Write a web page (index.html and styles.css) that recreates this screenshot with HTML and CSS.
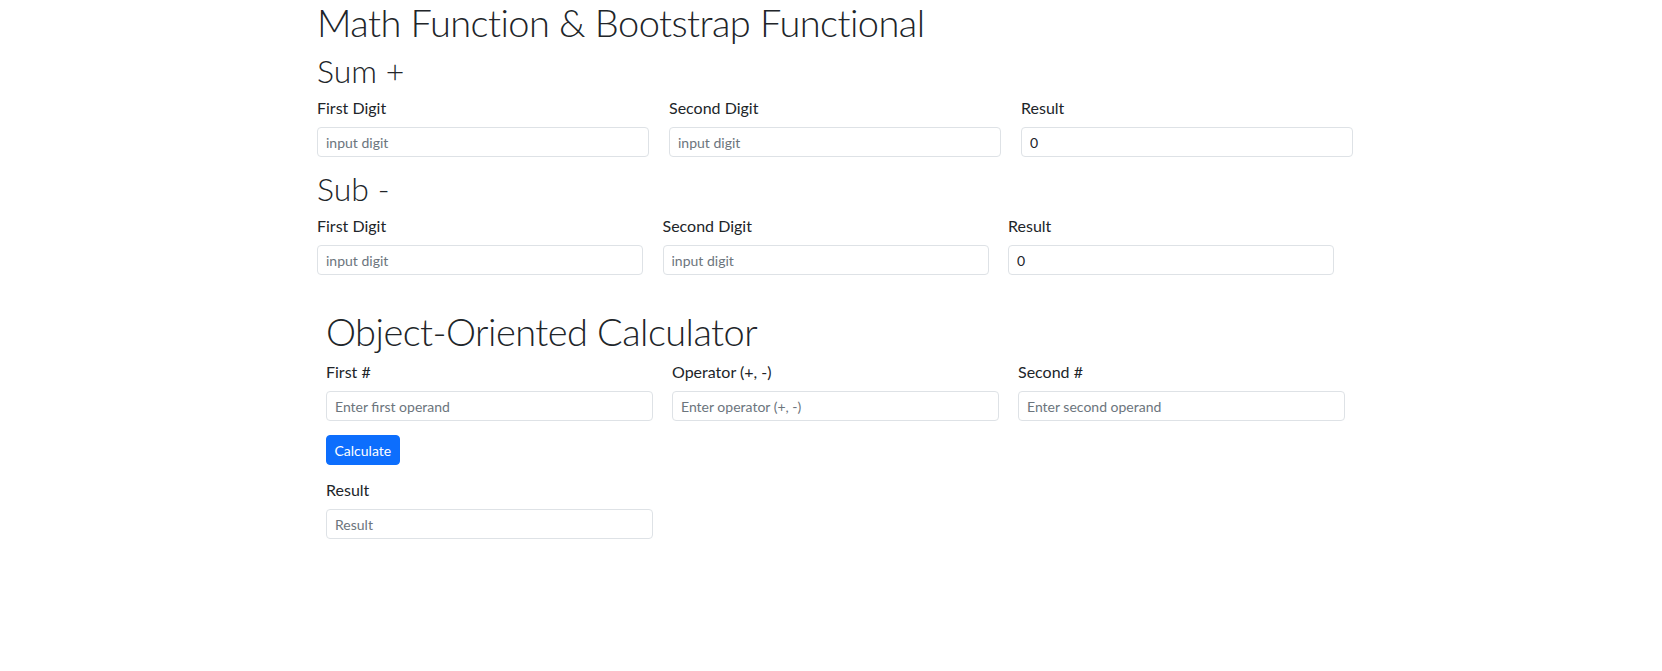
FILE: index.html
```html
<!DOCTYPE html>
<html lang="en">
<head>
<meta charset="utf-8">
<title>Math Function &amp; Bootstrap Functional</title>
<link rel="stylesheet" href="styles.css">
</head>
<body>
<main class="page">
  <section class="math">
    <h1 class="display-title">Math Function &amp; Bootstrap Functional</h1>

    <h2 class="section-title">Sum +</h2>
    <div class="field-row row-sum">
      <div class="field">
        <label class="field-label">First Digit</label>
        <input class="control" type="text" placeholder="input digit">
      </div>
      <div class="field">
        <label class="field-label">Second Digit</label>
        <input class="control" type="text" placeholder="input digit">
      </div>
      <div class="field">
        <label class="field-label">Result</label>
        <input class="control" type="text" value="0" readonly>
      </div>
    </div>

    <h2 class="section-title section-title-sub">Sub -</h2>
    <div class="field-row row-sub">
      <div class="field">
        <label class="field-label">First Digit</label>
        <input class="control" type="text" placeholder="input digit">
      </div>
      <div class="field">
        <label class="field-label">Second Digit</label>
        <input class="control" type="text" placeholder="input digit">
      </div>
      <div class="field">
        <label class="field-label">Result</label>
        <input class="control" type="text" value="0" readonly>
      </div>
    </div>
  </section>

  <section class="oop">
    <h1 class="display-title">Object-Oriented Calculator</h1>
    <div class="field-row row-oop">
      <div class="field">
        <label class="field-label">First #</label>
        <input class="control" type="text" placeholder="Enter first operand">
      </div>
      <div class="field">
        <label class="field-label">Operator (+, -)</label>
        <input class="control" type="text" placeholder="Enter operator (+, -)">
      </div>
      <div class="field">
        <label class="field-label">Second #</label>
        <input class="control" type="text" placeholder="Enter second operand">
      </div>
    </div>
    <button class="btn-primary" type="button">Calculate</button>
    <div class="field result-field">
      <label class="field-label">Result</label>
      <input class="control" type="text" placeholder="Result" readonly>
    </div>
  </section>
</main>
</body>
</html>
```

FILE: styles.css
```css
* {
  box-sizing: border-box;
}

html, body {
  margin: 0;
  padding: 0;
  background: #ffffff;
}

body {
  font-family: Lato, "Open Sans", "Liberation Sans", sans-serif;
  color: #212529;
  font-size: 16px;
}

.page {
  display: flex;
  flex-direction: column;
}

.math {
  padding-left: 317px;
  display: flex;
  flex-direction: column;
}

.oop {
  padding-left: 326px;
  margin-top: 34px;
  display: flex;
  flex-direction: column;
  align-items: flex-start;
}

.display-title {
  margin: 0;
  font-size: 38px;
  font-weight: 300;
  letter-spacing: -0.55px;
  line-height: 44px;
  color: #212529;
}

.section-title {
  margin: 8px 0 0;
  font-size: 32px;
  font-weight: 300;
  line-height: 38px;
  color: #212529;
}

.section-title-sub {
  margin-top: 13px;
}

.field-row {
  display: grid;
  margin-top: 6px;
}

.row-sum {
  grid-template-columns: repeat(3, 332px);
  column-gap: 20px;
}

.row-sub {
  grid-template-columns: repeat(3, 326px);
  column-gap: 19.5px;
}

.row-oop {
  grid-template-columns: repeat(3, 326.5px);
  column-gap: 19.5px;
  margin-top: 7px;
}

.field {
  display: flex;
  flex-direction: column;
}

.field-label {
  font-size: 16px;
  line-height: 24px;
  margin-bottom: 7px;
}

.control {
  height: 30px;
  width: 100%;
  padding: 0 8px;
  border: 1px solid #dee2e6;
  border-radius: 4px;
  font-family: inherit;
  font-size: 14px;
  color: #212529;
  background: #ffffff;
  outline: none;
}

.control::placeholder {
  color: #6c757d;
  opacity: 1;
}

.btn-primary {
  margin-top: 14px;
  height: 30px;
  padding: 0 7.5px;
  border: 1px solid #0d6efd;
  border-radius: 4px;
  background: #0d6efd;
  color: #ffffff;
  font-family: inherit;
  font-size: 14px;
}

.result-field {
  margin-top: 13px;
  width: 326.5px;
}
```
